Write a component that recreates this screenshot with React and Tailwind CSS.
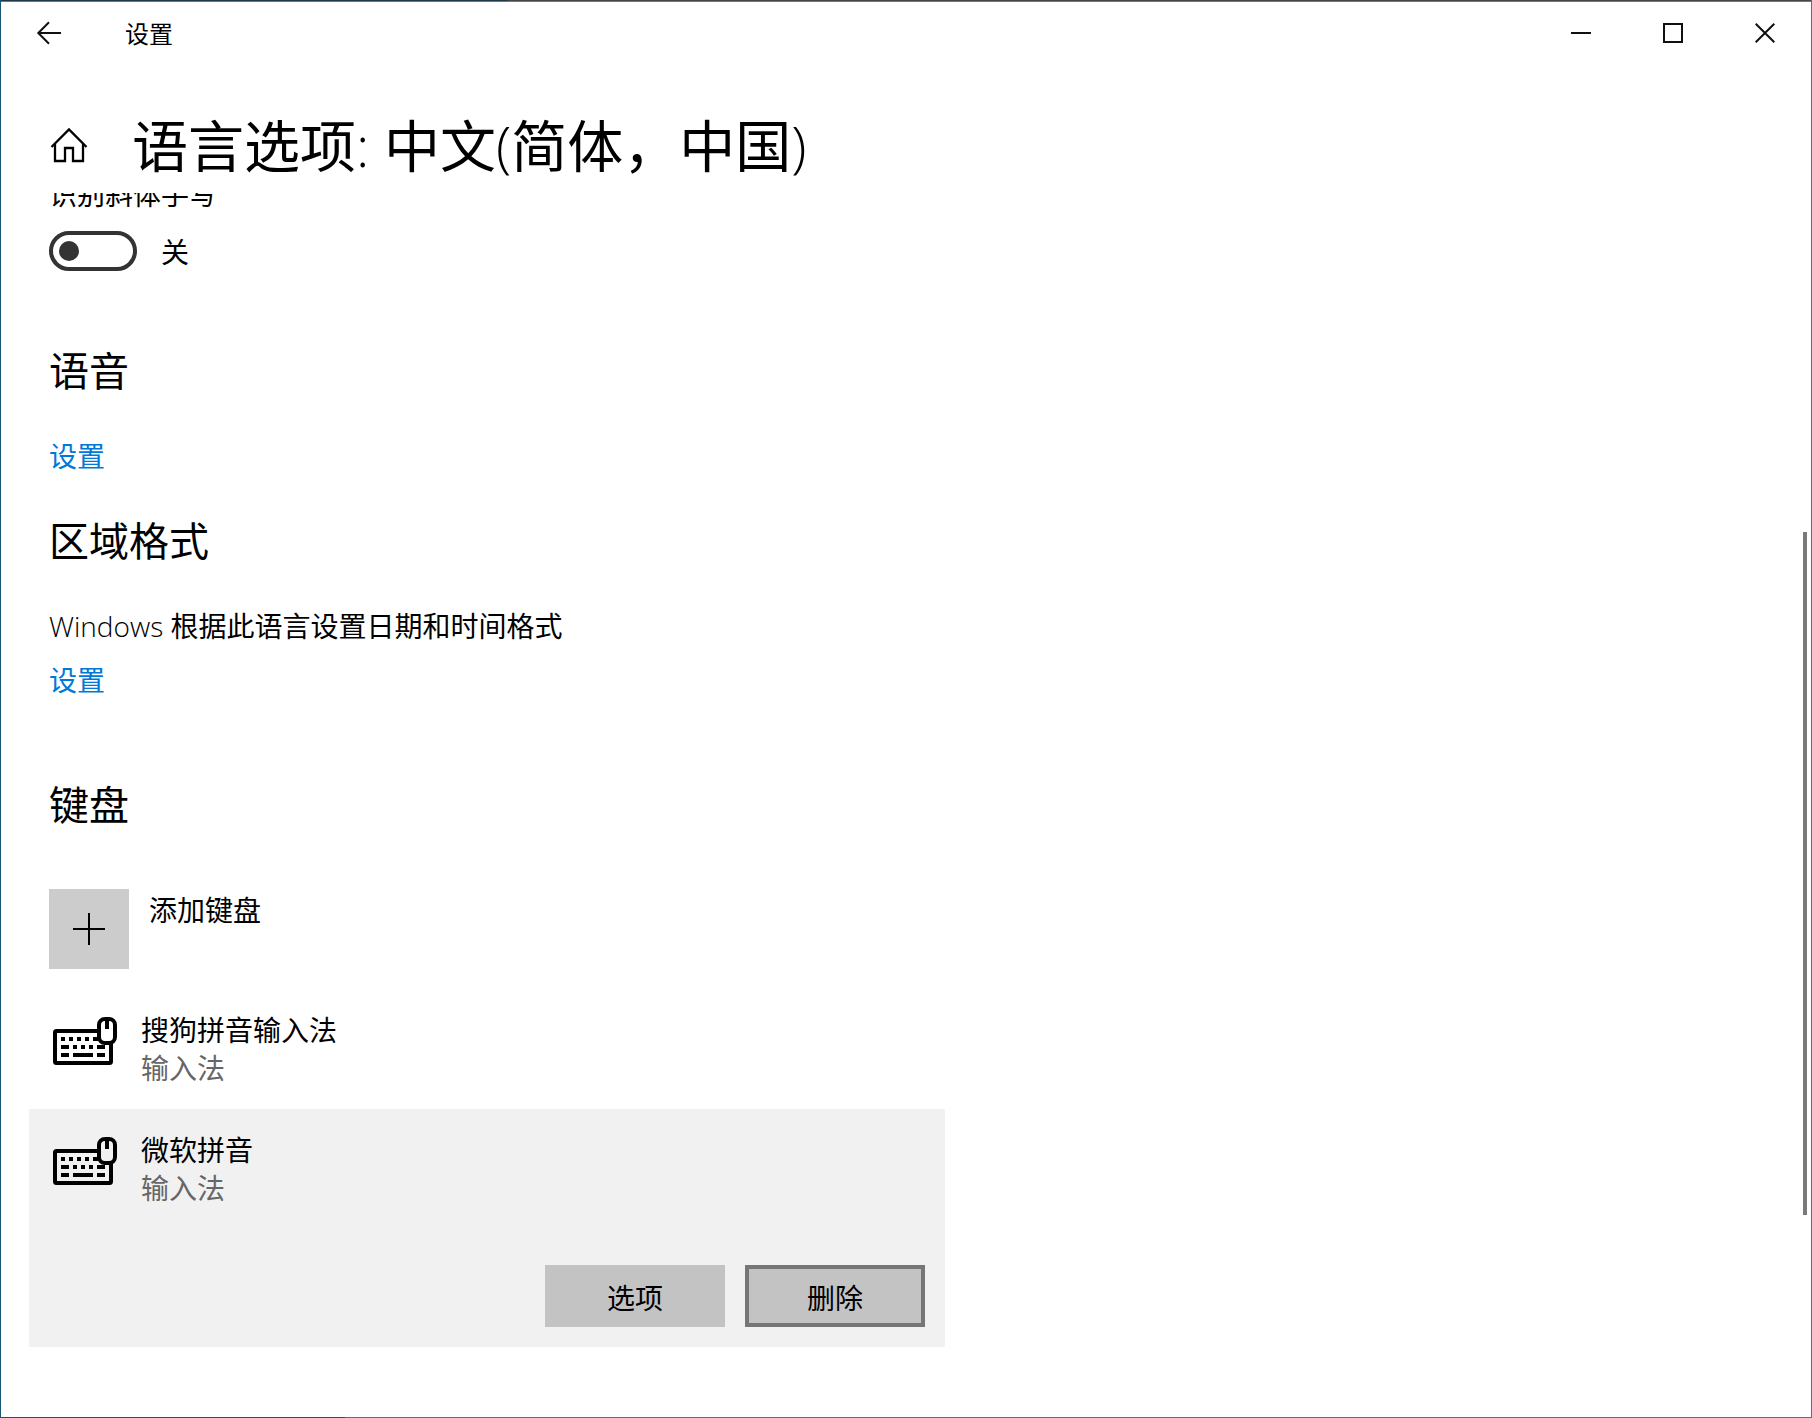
import React, { useState } from "react";

const BackIcon = () => (
  <svg width="26" height="24" viewBox="0 0 26 24" fill="none" stroke="#111" strokeWidth="2" aria-hidden="true">
    <path d="M13 1.300 2.300 12 13 22.700M2.500 12H25" />
  </svg>
);

const HomeIcon = () => (
  <svg width="38" height="36" viewBox="0 0 38 36" fill="none" stroke="#000" strokeWidth="2.300" aria-hidden="true">
    <path d="M1.500 20 19 2.500 36.500 20" />
    <path d="M5 17v17h10V21h8v13h10V17" />
  </svg>
);

const KeyboardIcon = () => (
  <svg width="64" height="48" viewBox="0 0 64 48" aria-hidden="true">
    <rect x="2" y="14" width="56" height="32" rx="1.500" fill="none" stroke="#000" strokeWidth="4" />
    <path
      d="M8 20h4v4H8zM16 20h4v4h-4zM24 20h4v4h-4zM32 20h4v4h-4zM40 20h5v4h-5zM8 28h8v4H8zM20 28h4v4h-4zM28 28h4v4h-4zM36 28h4v4h-4zM44 28h8v4h-8zM8 36h8v4H8zM20 36h20v4H20zM44 36h8v4h-8z"
      fill="#000"
    />
    <rect x="46" y="2" width="16" height="24" rx="6" className="fill-white group-data-[selected=true]:fill-[#f1f1f1]" stroke="#000" strokeWidth="4" />
    <path d="M54 2v10" stroke="#000" strokeWidth="4" />
  </svg>
);

const WindowButton = ({ label, children }) => (
  <button type="button" aria-label={label} className="flex w-[92px] items-center justify-center hover:bg-gray-200">
    <svg width="20" height="20" viewBox="0 0 20 20" fill="none" stroke="#111" strokeWidth="2" aria-hidden="true">
      {children}
    </svg>
  </button>
);

const SectionTitle = ({ className, children }) => (
  <h2 className={`text-[40px] leading-[56px] ${className}`}>{children}</h2>
);

const SettingsLink = ({ className, children }) => (
  <a href="#settings" className={`w-fit text-[#0078d7] hover:text-gray-500 ${className}`}>
    {children}
  </a>
);

const InputMethod = ({ name, selected, children }) => (
  <li data-selected={selected} className="group -ml-5 max-w-[916px] px-5 pt-5 data-[selected=true]:bg-[#f1f1f1]">
    <div className="flex items-start gap-6 pb-[23px] pl-1">
      <div className="pt-2">
        <KeyboardIcon />
      </div>
      <div className="pt-px leading-[38px]">
        <p>{name}</p>
        <p className="text-[#666]">输入法</p>
      </div>
    </div>
    {children}
  </li>
);

export default function App() {
  const [slanted, setSlanted] = useState(false);

  return (
    <div
      lang="zh-CN"
      className="flex min-h-screen flex-col border-x border-l-[#1a5676] border-r-[#6b6b6b] bg-white font-['Noto_Sans_CJK_SC',sans-serif] text-[28px] leading-[40px] text-black"
    >
      <div className="h-px bg-linear-to-r from-[#203848] from-28% to-[#454545] to-28%" />
      <header className="flex h-[63px] border-t border-[#757575]">
        <button type="button" aria-label="返回" className="flex w-24 items-center justify-center">
          <BackIcon />
        </button>
        <div className="flex flex-1 items-center pl-7 text-2xl">设置</div>
        <WindowButton label="最小化">
          <path d="M0 10h20" />
        </WindowButton>
        <WindowButton label="最大化">
          <path d="M1 1h18v18H1z" />
        </WindowButton>
        <WindowButton label="关闭">
          <path d="m.7.7 18.600 18.600M19.300.7.7 19.300" />
        </WindowButton>
      </header>

      <div className="flex h-[129px] items-center gap-11 pl-[49px] pt-8">
        <a href="#home" aria-label="主页">
          <HomeIcon />
        </a>
        <h1 className="font-['Open_Sans','Noto_Sans_CJK_SC',sans-serif] text-[56px] leading-[72px]">
          语言选项<span className="font-light">: </span>中文<span className="font-light">(</span>简体，中国
          <span className="font-light">)</span>
        </h1>
      </div>

      <div className="flex flex-1">
        <main className="flex flex-1 flex-col overflow-hidden pb-[70px] pl-12">
          <p id="slanted-label" className="-mt-5">
            识别斜体手写
          </p>
          <div className="mt-[18px] flex items-center gap-6">
            <input
              type="checkbox"
              role="switch"
              aria-labelledby="slanted-label"
              checked={slanted}
              onChange={(e) => setSlanted(e.target.checked)}
              className="flex h-10 w-[88px] appearance-none items-center rounded-full border-4 border-[#333] px-1.5 before:size-5 before:rounded-full before:bg-[#333] checked:justify-end checked:border-[#0078d7] checked:bg-[#0078d7] checked:before:bg-white"
            />
            <span>{slanted ? "开" : "关"}</span>
          </div>

          <SectionTitle className="mt-[70px]">语音</SectionTitle>
          <SettingsLink className="mt-[38px]">设置</SettingsLink>

          <SectionTitle className="mt-9">区域格式</SectionTitle>
          <p className="mt-[39px] font-['Open_Sans','Noto_Sans_CJK_SC',sans-serif]">
            <span className="font-light">Windows </span>根据此语言设置日期和时间格式
          </p>
          <SettingsLink className="mt-[13px]">设置</SettingsLink>

          <SectionTitle className="mt-[76px]">键盘</SectionTitle>
          <button type="button" className="mt-[58px] flex w-fit items-start gap-5 text-left">
            <span className="flex size-20 items-center justify-center bg-[#ccc]">
              <svg width="32" height="32" viewBox="0 0 32 32" stroke="#000" strokeWidth="2" aria-hidden="true">
                <path d="M16 0v32M0 16h32" />
              </svg>
            </span>
            <span>添加键盘</span>
          </button>

          <ul className="mt-5">
            <InputMethod name="搜狗拼音输入法" selected={false} />
            <InputMethod name="微软拼音" selected={true}>
              <div className="flex justify-end gap-5 pb-5 pt-9">
                <button type="button" className="h-[62px] w-[180px] bg-[#c3c3c3] pt-0.5">
                  选项
                </button>
                <button type="button" className="h-[62px] w-[180px] border-4 border-[#767676] bg-[#c3c3c3] pt-0.5">
                  删除
                </button>
              </div>
            </InputMethod>
          </ul>
        </main>

        <div className="flex w-2 flex-col" aria-hidden="true">
          <div className="grow-[339]" />
          <div className="w-1 grow-[683] bg-[#7a7a7a]" />
          <div className="grow-[202]" />
        </div>
      </div>
      <div className="h-px bg-linear-to-r from-[#1f5266] from-19% to-[#6b6b6b] to-19%" />
    </div>
  );
}
